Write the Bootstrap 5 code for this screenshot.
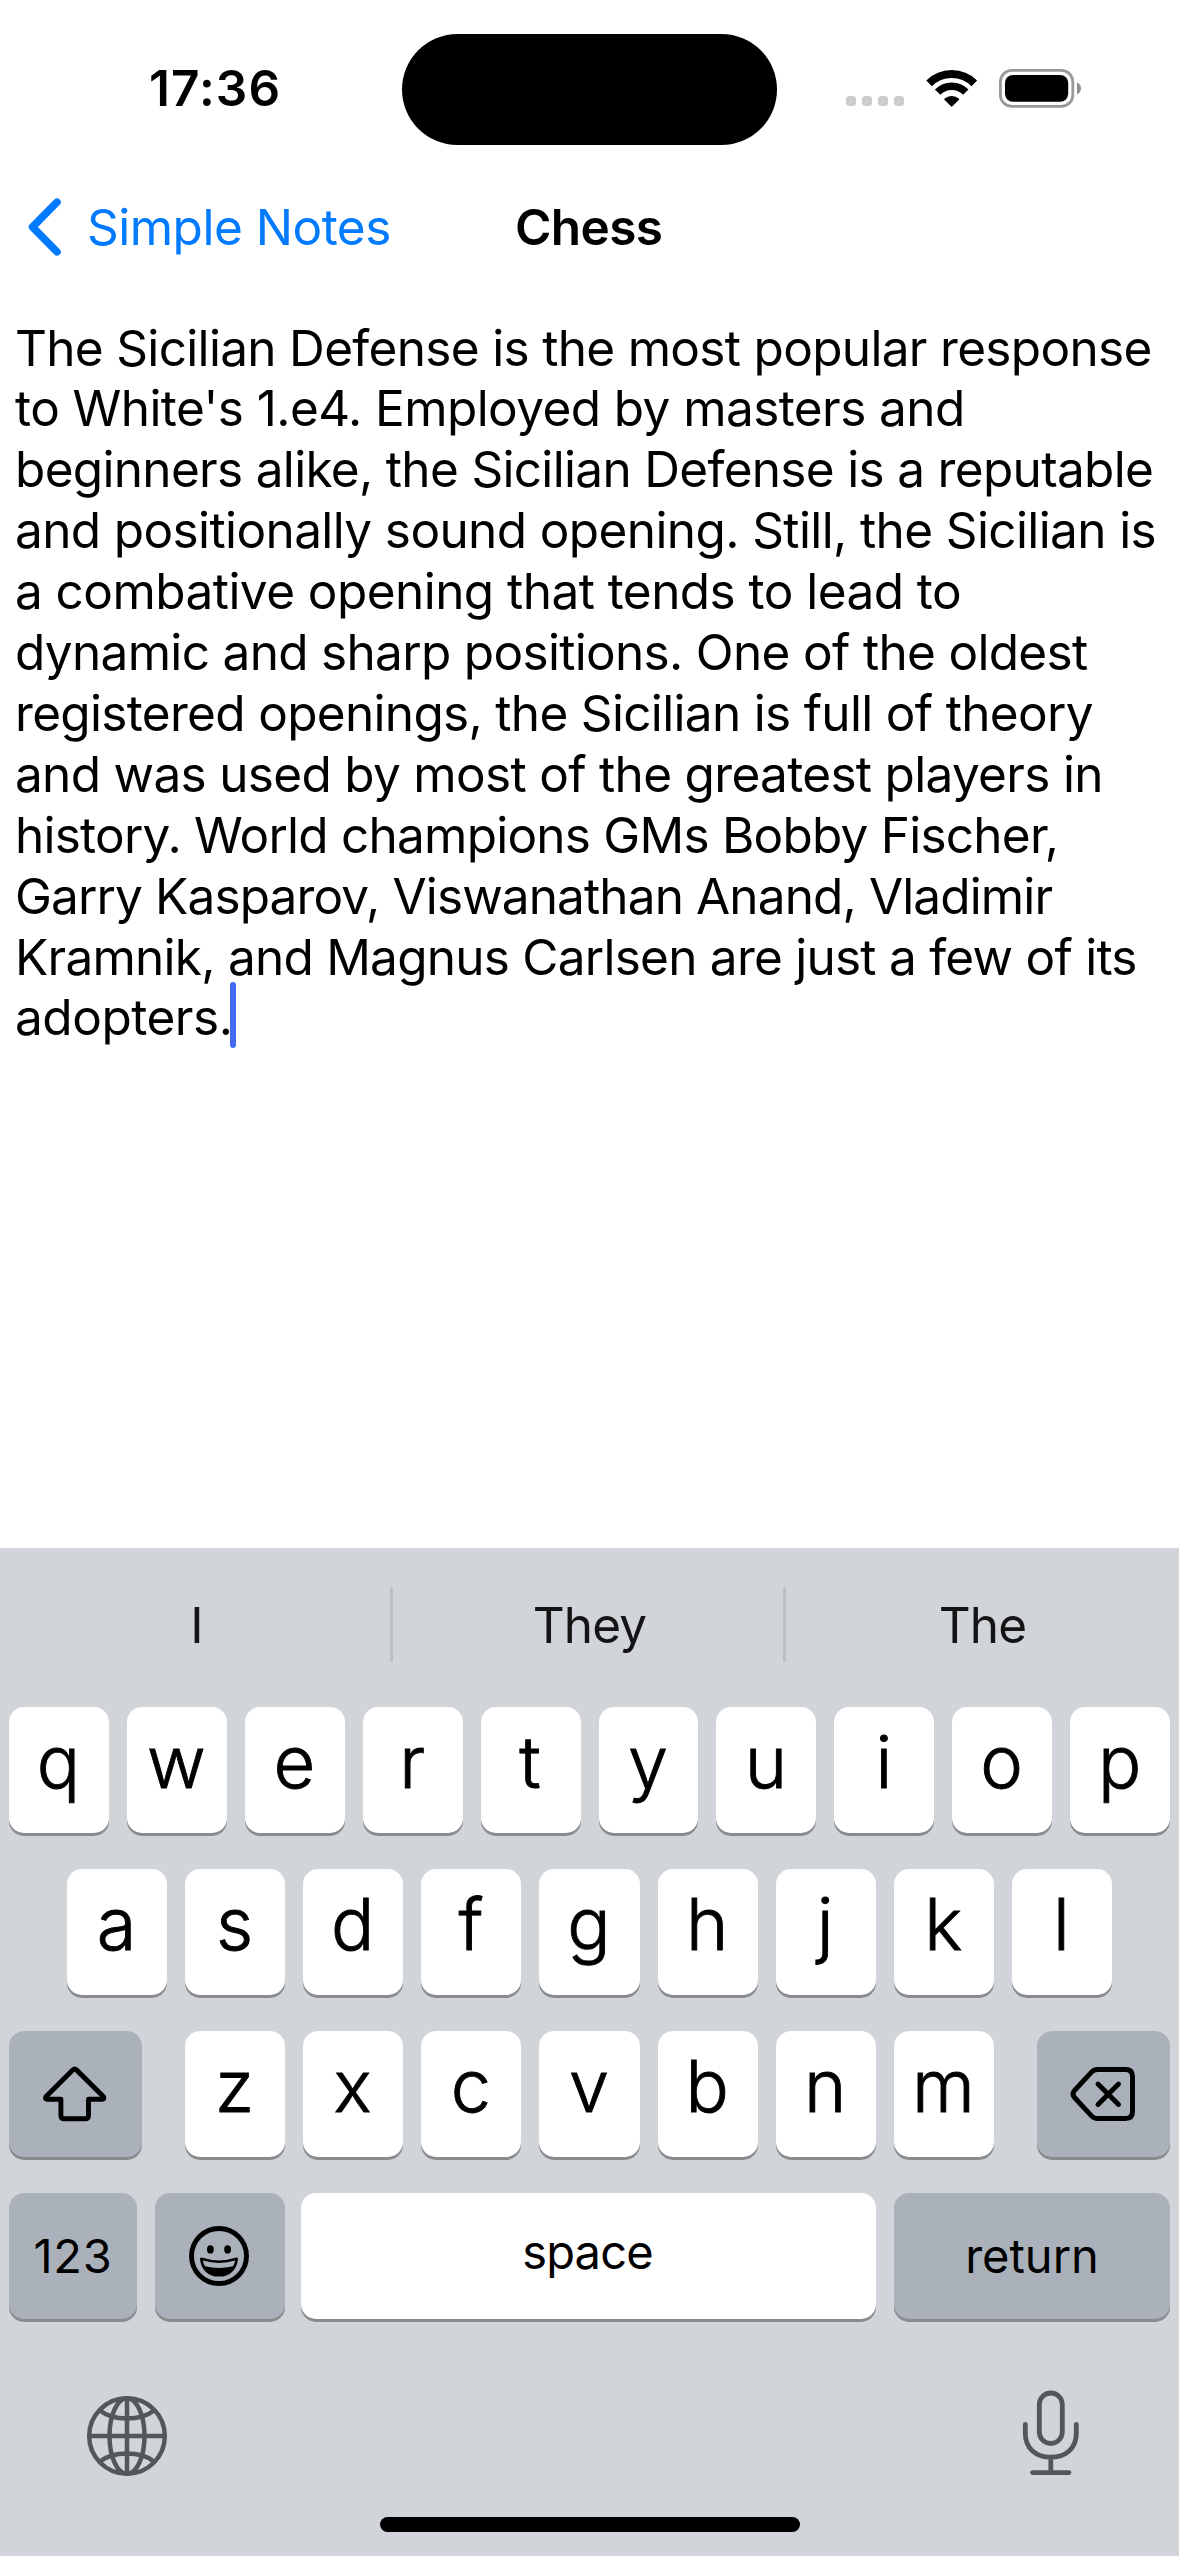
<!DOCTYPE html>
<html lang="en">
<head>
<meta charset="utf-8">
<meta name="viewport" content="width=device-width, initial-scale=1">
<title>Chess</title>
<link rel="stylesheet" href="https://cdn.jsdelivr.net/npm/bootstrap@5.3.0/dist/css/bootstrap.min.css">
<style>
  body { font-family: Inter, "Liberation Sans", sans-serif; color: #000; background: #fff; font-size: 49.5px; line-height: 60px; }
  svg { display: block; }
  .screen { width: 1179px; height: 2556px; }

  /* Status bar */
  .status { height: 177px; }
  .status-side { width: 402px; height: 177px; }
  .clock { padding-left: 149px; letter-spacing: 1.1px; padding-bottom: 1px; }
  .island { width: 375px; height: 111px; border-radius: 56px; background: #000; margin-top: 1px; }
  .signals { padding-left: 69px; }
  .dots { gap: 6px; padding: 25px 22px 0 0; }
  .dots i { width: 10px; height: 10px; border-radius: 3.5px; background: #ccc; }

  /* Navigation bar */
  .topnav { height: 100px; padding: 0 28px 0 28px; }
  .topnav a { color: #007aff; letter-spacing: -.5px; gap: 26px; }
  .topnav h1 { font-size: 49.5px; line-height: 60px; letter-spacing: -.6px; }
  .nav-side { width: 487px; }

  /* Note text */
  .note { padding: 40.500px 0 0 15px; line-height: 60.9px; letter-spacing: -.68px; white-space: nowrap; }
  .note span { display: block; }
  .note span:nth-child(2) { letter-spacing: -.58px; }
  .note span:nth-child(4) { letter-spacing: -.61px; }
  .note span:nth-child(5) { letter-spacing: -.55px; }
  .note span:nth-child(9) { letter-spacing: -.77px; }
  .note span:nth-child(10) { letter-spacing: -.87px; }
  .note span:nth-child(11) { letter-spacing: -.75px; }
  .note span:nth-child(12) { letter-spacing: -.47px; }
  .caret { display: inline-block; width: 6px; height: 66px; border-radius: 3px; background: #426bf2; margin: -20px 0 -20px -2px; vertical-align: 7px; }

  /* Keyboard */
  .keyboard { height: 1008px; background: #d1d4d9; }
  .suggest { height: 153px; color: #141414; letter-spacing: -.8px; }
  .suggest > div { width: 390px; padding-left: 3px; }
  .suggest > hr { width: 3px; height: 75px; margin: 0; border: 0; border-radius: 2px; background: #bbbec3; opacity: 1; }
  .keys { padding: 6px 9px 0; gap: 36px; }
  .keyrow { gap: 18px; height: 126px; }
  .keyrow.home { padding: 0 58px; }
  .letters { gap: 18px; margin: 0 25px; }
  .key { flex: 1 1 0; height: 126px; padding: 0 1px 18px 0; border: 0; border-radius: 15px; background: #fff; color: #000; box-shadow: 0 3px 0 #898b8f;
         display: flex; align-items: center; justify-content: center; font-size: 72px; font-weight: 300; line-height: 87px;
         -webkit-text-stroke: .9px #000; }
  .key.fn { flex: none; background: #abb1bb; padding: 0 2px 0 0; }
  .key.txt { font-size: 47px; font-weight: 400; line-height: 57px; -webkit-text-stroke: 0; padding: 0 0 2px; }
  .w-shift { width: 133px; }
  .w-num { width: 128px; letter-spacing: .8px; }
  .w-emoji { width: 130px; }
  .w-return { width: 276px; }
  .key.space { padding: 0 2px 9px 0; letter-spacing: -.8px; margin-left: -2px; }
  .tools { height: 198px; padding: 36px 92px 0 82px; }
  .homebar { width: 420px; height: 15px; border-radius: 8px; background: #000; }
</style>
</head>
<body>
<div class="screen d-flex flex-column overflow-hidden">

  <header class="status d-flex align-items-center">
    <div class="status-side d-flex align-items-center"><span class="clock fw-semibold">17:36</span></div>
    <div class="island"></div>
    <div class="status-side signals d-flex align-items-center">
      <div class="dots d-flex"><i></i><i></i><i></i><i></i></div>
      <svg width="170" height="56" viewBox="6 0 170 56" fill="none">
        <path d="M9.1 22.4A32 32 0 0 1 54.3 22.4" stroke="#000" stroke-width="8"/>
        <path d="M17.6 31.1A20 20 0 0 1 45.8 31.1" stroke="#000" stroke-width="7.6"/>
        <path d="M31.7 45.2L24.8 38.3A10 10 0 0 1 38.6 38.3Z" fill="#000" stroke="#000" stroke-width="1.2" stroke-linejoin="round"/>
        <rect x="80.4" y="9.4" width="72.4" height="36" rx="11.5" stroke="#999" stroke-width="2.8"/>
        <rect x="85" y="14" width="63.2" height="26.8" rx="8" fill="#000"/>
        <path d="M157 21.5C159.6 22.6 161 24.8 161 27.4S159.6 32.200 157 33.300Z" fill="#8f8f8f"/>
      </svg>
    </div>
  </header>

  <nav class="topnav d-flex align-items-center">
    <div class="nav-side d-flex">
      <a href="#" class="d-flex align-items-center text-decoration-none">
        <svg width="33" height="58" viewBox="0 0 33 58" fill="none"><path d="M29 4.200L4.500 29L29 53.800" stroke="#007aff" stroke-width="7.6" stroke-linecap="round" stroke-linejoin="round"/></svg>
        <span>Simple Notes</span>
      </a>
    </div>
    <h1 class="fw-semibold m-0">Chess</h1>
  </nav>

  <main class="note flex-grow-1">
    <span>The Sicilian Defense is the most popular response</span>
    <span>to White's 1.e4. Employed by masters and</span>
    <span>beginners alike, the Sicilian Defense is a reputable</span>
    <span>and positionally sound opening. Still, the Sicilian is</span>
    <span>a combative opening that tends to lead to</span>
    <span>dynamic and sharp positions. One of the oldest</span>
    <span>registered openings, the Sicilian is full of theory</span>
    <span>and was used by most of the greatest players in</span>
    <span>history. World champions GMs Bobby Fischer,</span>
    <span>Garry Kasparov, Viswanathan Anand, Vladimir</span>
    <span>Kramnik, and Magnus Carlsen are just a few of its</span>
    <span>adopters.<i class="caret"></i></span>
  </main>

  <section class="keyboard d-flex flex-column flex-shrink-0">
    <div class="suggest d-flex align-items-center text-center">
      <div>I</div><hr><div>They</div><hr><div>The</div>
    </div>

    <div class="keys d-flex flex-column">
      <div class="keyrow d-flex">
        <button class="key">q</button><button class="key">w</button><button class="key">e</button><button class="key">r</button><button class="key">t</button><button class="key">y</button><button class="key">u</button><button class="key">i</button><button class="key">o</button><button class="key">p</button>
      </div>
      <div class="keyrow home d-flex">
        <button class="key">a</button><button class="key">s</button><button class="key">d</button><button class="key">f</button><button class="key">g</button><button class="key">h</button><button class="key">j</button><button class="key">k</button><button class="key">l</button>
      </div>
      <div class="keyrow d-flex">
        <button class="key fn w-shift" aria-label="shift">
          <svg width="74" height="68" viewBox="0 0 74 68" fill="none" stroke="#000" stroke-width="4.900" stroke-linejoin="round"><path d="M34.700 10.100Q36.700 8.200 38.700 10.100L65.300 36.400Q67 39 64.200 39.300H50.500V55.500Q50.500 58.800 47.200 58.800H26.200Q22.900 58.800 22.900 55.500V39.300H9.200Q6.400 39 8.100 36.400Z"/></svg>
        </button>
        <div class="letters d-flex flex-grow-1">
          <button class="key">z</button><button class="key">x</button><button class="key">c</button><button class="key">v</button><button class="key">b</button><button class="key">n</button><button class="key">m</button>
        </div>
        <button class="key fn w-shift" aria-label="delete">
          <svg width="77" height="68" viewBox="0 0 77 68" fill="none" stroke="#000" stroke-width="4.900" stroke-linecap="round" stroke-linejoin="round"><path d="M33.500 9.500H61.500Q68.500 9.500 68.500 16.500V51.500Q68.500 58.500 61.500 58.500H33.500Q30 58.500 27.500 55.800L10.500 37.500Q7.500 34 10.500 30.500L27.500 12.200Q30 9.500 33.500 9.500Z"/><path d="M34 24L54.500 44.500M54.500 24L34 44.500"/></svg>
        </button>
      </div>
      <div class="keyrow d-flex">
        <button class="key fn txt w-num">123</button>
        <button class="key fn w-emoji" aria-label="emoji">
          <svg width="70" height="70" viewBox="-1 1 70 70"><circle cx="34" cy="36" r="27.500" fill="none" stroke="#000" stroke-width="4.900"/><ellipse cx="25.400" cy="29.400" rx="3.400" ry="4.200"/><ellipse cx="42.600" cy="29.400" rx="3.400" ry="4.200"/><path d="M16.500 37.600Q34 43.200 51.500 37.600Q53.200 37.400 53 39.400C51.500 50 45 56.600 34 56.600S16.500 50 15 39.400Q14.800 37.400 16.500 37.600Z"/><path d="M17.800 40.600Q34 45.400 50.200 40.600Q49.600 43.800 48 46.200Q34 49.600 20 46.200Q18.400 43.800 17.800 40.600Z" fill="#abb1bb"/></svg>
        </button>
        <button class="key txt space">space</button>
        <button class="key fn txt w-return">return</button>
      </div>
    </div>

    <div class="tools d-flex justify-content-between align-items-start">
      <svg class="mt-4" width="90" height="114" viewBox="0 0 90 114" fill="none" stroke="#53575c" stroke-width="4.500"><circle cx="45" cy="57" r="37.800"/><ellipse cx="45" cy="57" rx="17.500" ry="37.800"/><path d="M45 19V95M7 57H83M18 31.500Q28 39.500 45 39.500T72 31.500M18 82.500Q28 74.500 45 74.500T72 82.500"/></svg>
      <svg class="mt-4" width="72" height="102" viewBox="0 -11 72 102" fill="none" stroke="#53575c" stroke-width="4.800" stroke-linecap="round"><rect x="24.300" y="3" width="23" height="50.500" rx="11.500"/><path d="M10.300 34.500V43.500C10.300 58.500 21 67.200 35.800 67.200S61.300 58.500 61.300 43.500V34.500M35.800 67.200V82.600M17.500 82.600H54"/></svg>
    </div>
    <div class="homebar mx-auto"></div>
  </section>
</div>
<script src="https://cdn.jsdelivr.net/npm/bootstrap@5.3.0/dist/js/bootstrap.bundle.min.js"></script>
</body>
</html>
